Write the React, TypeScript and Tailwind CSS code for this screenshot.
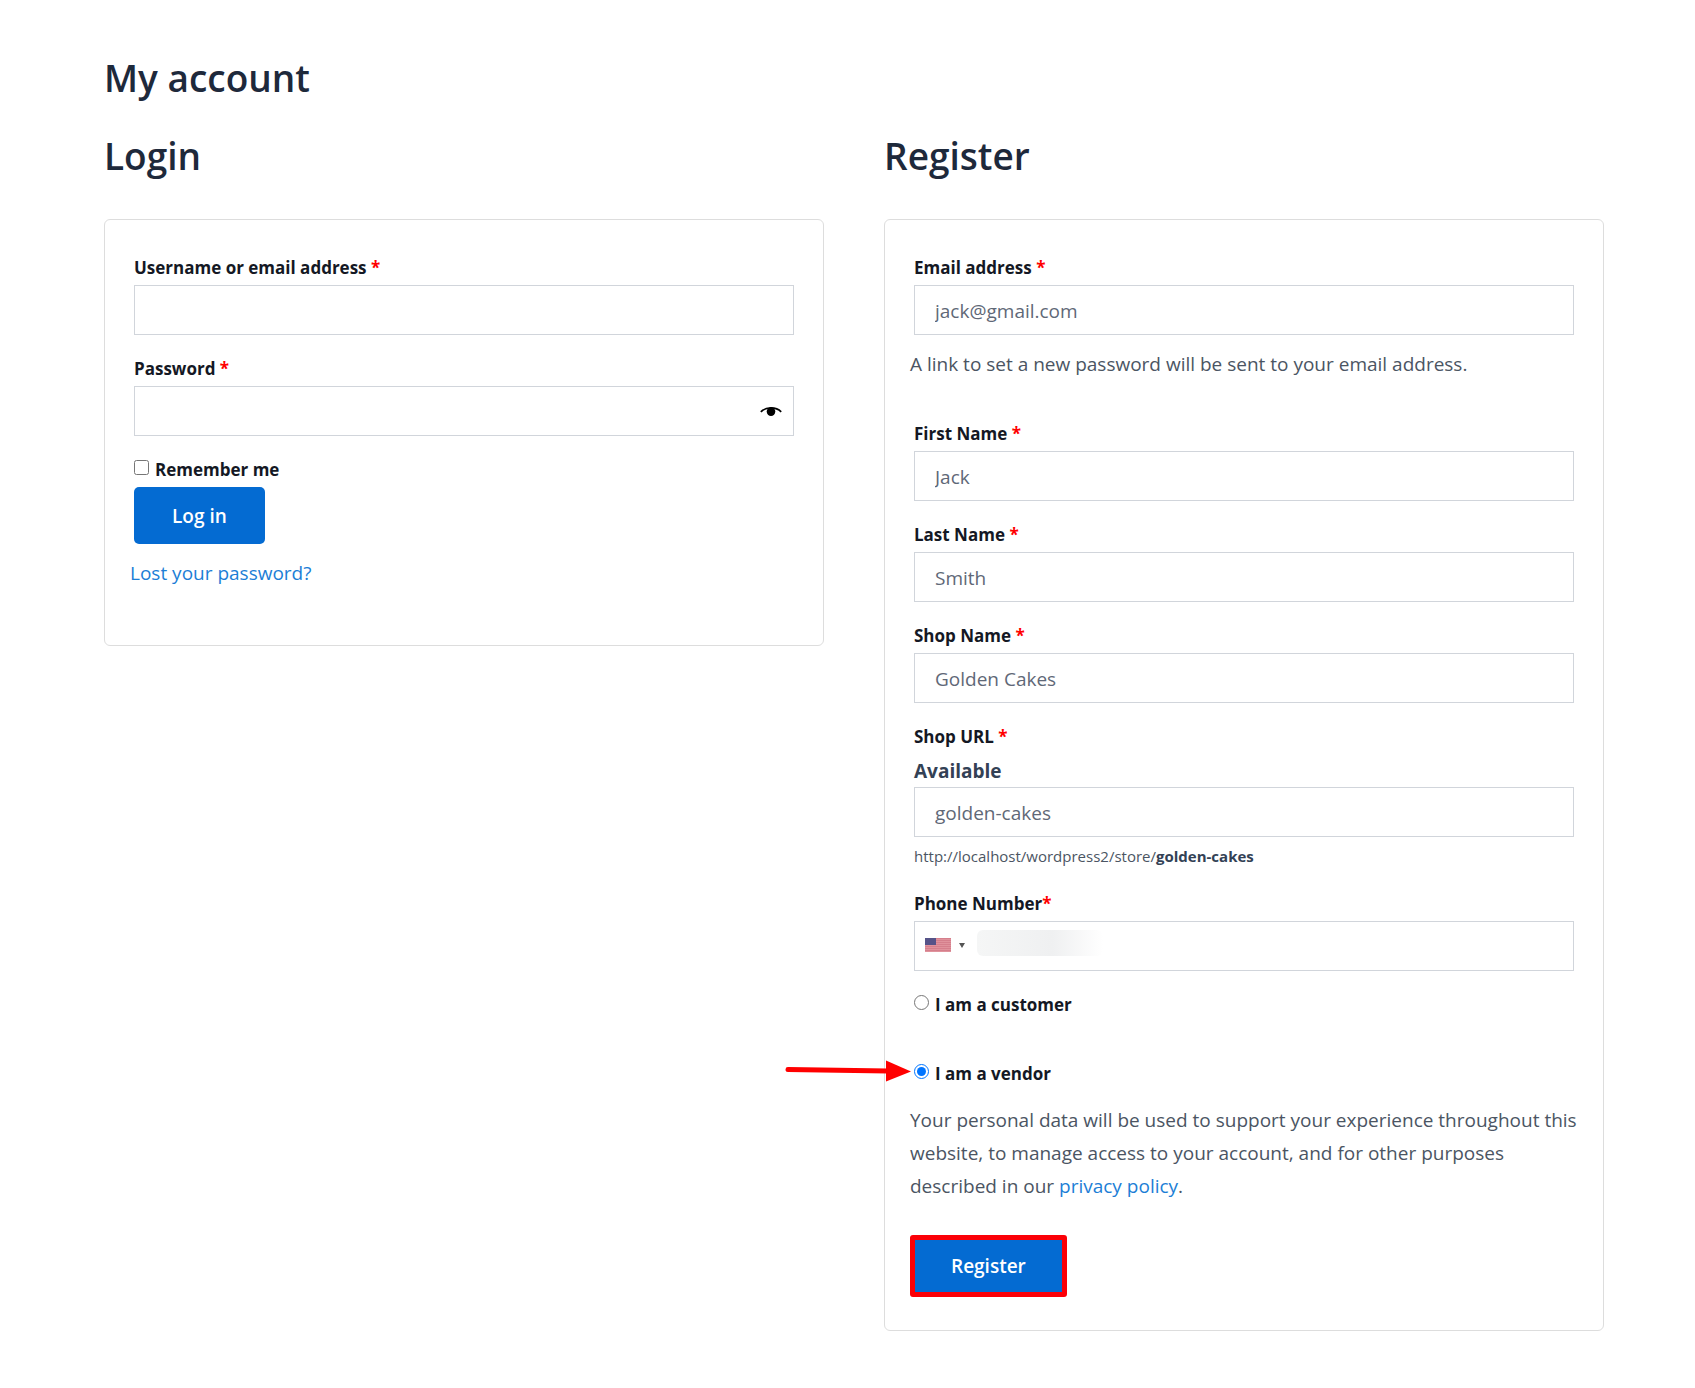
import React from 'react';

interface FieldProps {
    id: string;
    label: string;
    type?: string;
    value?: string;
    children?: React.ReactNode;
}

const inputClass = "block w-full h-[50px] border border-[#d1d5db] bg-white px-5 pt-0.5 text-[19px] text-[#5f6877] outline-none";
const labelClass = "block pt-0.5 text-[17px] leading-[34px] font-bold text-[#141824]";
const choiceClass = "flex items-center gap-[6px] pt-0.5 text-[17px] leading-[34px] font-bold text-[#141824]";
const textClass = "-mx-1 mt-[13px] text-[19px] leading-[33px] text-[#4b5563]";

const Required = () => <span className="text-[#ff0000]">*</span>;

const Field = ({ id, label, type = "text", value = "", children }: FieldProps) => (
    <div>
        <label htmlFor={id} className={labelClass}>{label} <Required /></label>
        {children}
        <input id={id} type={type} defaultValue={value} className={inputClass} />
    </div>
);

const EyeIcon = () => (
    <svg width="22" height="12" viewBox="0 0 22 12" aria-hidden="true">
        <path d="M0.8 5.8C6 0.6 16 0.6 21.2 5.8" fill="none" stroke="#000" strokeWidth="1.7" />
        <circle cx="11" cy="5.6" r="4.3" fill="#000" />
    </svg>
);

const UsFlag = () => (
    <svg width="26" height="14" viewBox="0 0 26 14" aria-hidden="true">
        <rect width="26" height="14" fill="#e0929c" />
        {[0, 2, 4, 6, 8, 10, 12].map((y) => (
            <rect key={y} y={y} width="26" height="1" fill="#d57f8c" />
        ))}
        <rect width="11" height="7" fill="#565388" />
    </svg>
);

const Arrow = () => (
    <svg width="129" height="24" viewBox="0 0 129 24" className="absolute right-full top-1 max-w-none" aria-hidden="true">
        <path d="M3 10.5L103 12" stroke="#ff0000" strokeWidth="5" strokeLinecap="round" />
        <path d="M101 1.5V22.5L126 12.5Z" fill="#ff0000" />
    </svg>
);

const LoginForm = () => (
    <form className="rounded-md border border-[#dddddd] px-[29px] pt-[29px] pb-[55px]">
        <div className="flex flex-col gap-[15px]">
            <Field id="username" label="Username or email address" />
            <div className="relative">
                <Field id="password" label="Password" type="password" />
                <button type="button" aria-label="Show password" className="absolute right-3 bottom-[18px]">
                    <EyeIcon />
                </button>
            </div>
            <label className={choiceClass}>
                <input type="checkbox" className="mb-1.5 size-[15px]" />
                Remember me
            </label>
        </div>
        <button type="button" className="block h-[57px] rounded-[5px] bg-[#046bd2] px-[38px] pt-0.5 text-[19px] font-semibold text-white">
            Log in
        </button>
        <p className={textClass}>
            <a href="#" className="text-[#1c7ed6]">Lost your password?</a>
        </p>
    </form>
);

const RegisterForm = () => (
    <form className="rounded-md border border-[#dddddd] px-[29px] pt-[29px] pb-[33px]">
        <Field id="email" label="Email address" type="email" value="jack@gmail.com" />
        <p className={textClass}>A link to set a new password will be sent to your email address.</p>

        <div className="mt-[34px] flex flex-col gap-[15px]">
            <Field id="first-name" label="First Name" value="Jack" />
            <Field id="last-name" label="Last Name" value="Smith" />
            <Field id="shop-name" label="Shop Name" value="Golden Cakes" />
            <div>
                <Field id="shop-url" label="Shop URL" value="golden-cakes">
                    <strong className="block pt-0.5 text-[19px] leading-[31px] font-bold text-[#334155]">Available</strong>
                </Field>
                <small className="mt-[5px] block text-[15px] leading-7 text-[#4b5563]">
                    http://localhost/wordpress2/store/<strong className="font-bold text-[#334155]">golden-cakes</strong>
                </small>
            </div>
            <div>
                <label htmlFor="phone" className={labelClass}>Phone Number<Required /></label>
                <div className="relative flex h-[50px] items-center border border-[#d1d5db]">
                    <button type="button" aria-label="Select country" className="flex items-center gap-2 pb-0.5 pl-[10px]">
                        <UsFlag />
                        <svg width="6" height="5" viewBox="0 0 6 5" aria-hidden="true">
                            <path d="M0 0H6L3 5Z" fill="#555" />
                        </svg>
                    </button>
                    <input id="phone" type="tel" className="h-full min-w-0 flex-1 px-3 text-[19px] outline-none" />
                    <span className="pointer-events-none absolute top-2 left-[62px] h-[26px] w-[126px] rounded-md bg-linear-to-r from-[#f5f6f6] via-[#eff0f1] via-60% to-white" />
                </div>
            </div>
            <label className={choiceClass}>
                <input type="radio" name="role" className="mb-1.5 size-[15px]" />
                I am a customer
            </label>
        </div>

        <div className="relative mt-[33px]">
            <Arrow />
            <label className={choiceClass}>
                <input type="radio" name="role" defaultChecked className="mb-1.5 size-[15px]" />
                I am a vendor
            </label>
        </div>

        <p className={textClass}>
            Your personal data will be used to support your experience throughout this website, to manage access to
            your account, and for other purposes described in our <a href="#" className="text-[#1c7ed6]">privacy policy</a>.
        </p>
        <button type="button" className="-ml-1 mt-8 block h-[62px] rounded-[3px] border-5 border-[#fb0007] bg-[#046bd2] px-9 text-[19px] font-semibold text-white">
            Register
        </button>
    </form>
);

const App = () => (
    <main className="min-h-screen bg-white pt-[52px] pr-[91px] pb-14 pl-[104px] font-['Open_Sans','Noto_Sans',sans-serif]">
        <h1 className="text-[37px] leading-[52px] font-semibold text-[#1e293b]">My account</h1>
        <div className="mt-[26px] grid grid-cols-2 items-start gap-15">
            <section>
                <h2 className="mb-[37px] text-[37px] leading-[52px] font-semibold text-[#1e293b]">Login</h2>
                <LoginForm />
            </section>
            <section>
                <h2 className="mb-[37px] text-[37px] leading-[52px] font-semibold text-[#1e293b]">Register</h2>
                <RegisterForm />
            </section>
        </div>
    </main>
);

export default App;
